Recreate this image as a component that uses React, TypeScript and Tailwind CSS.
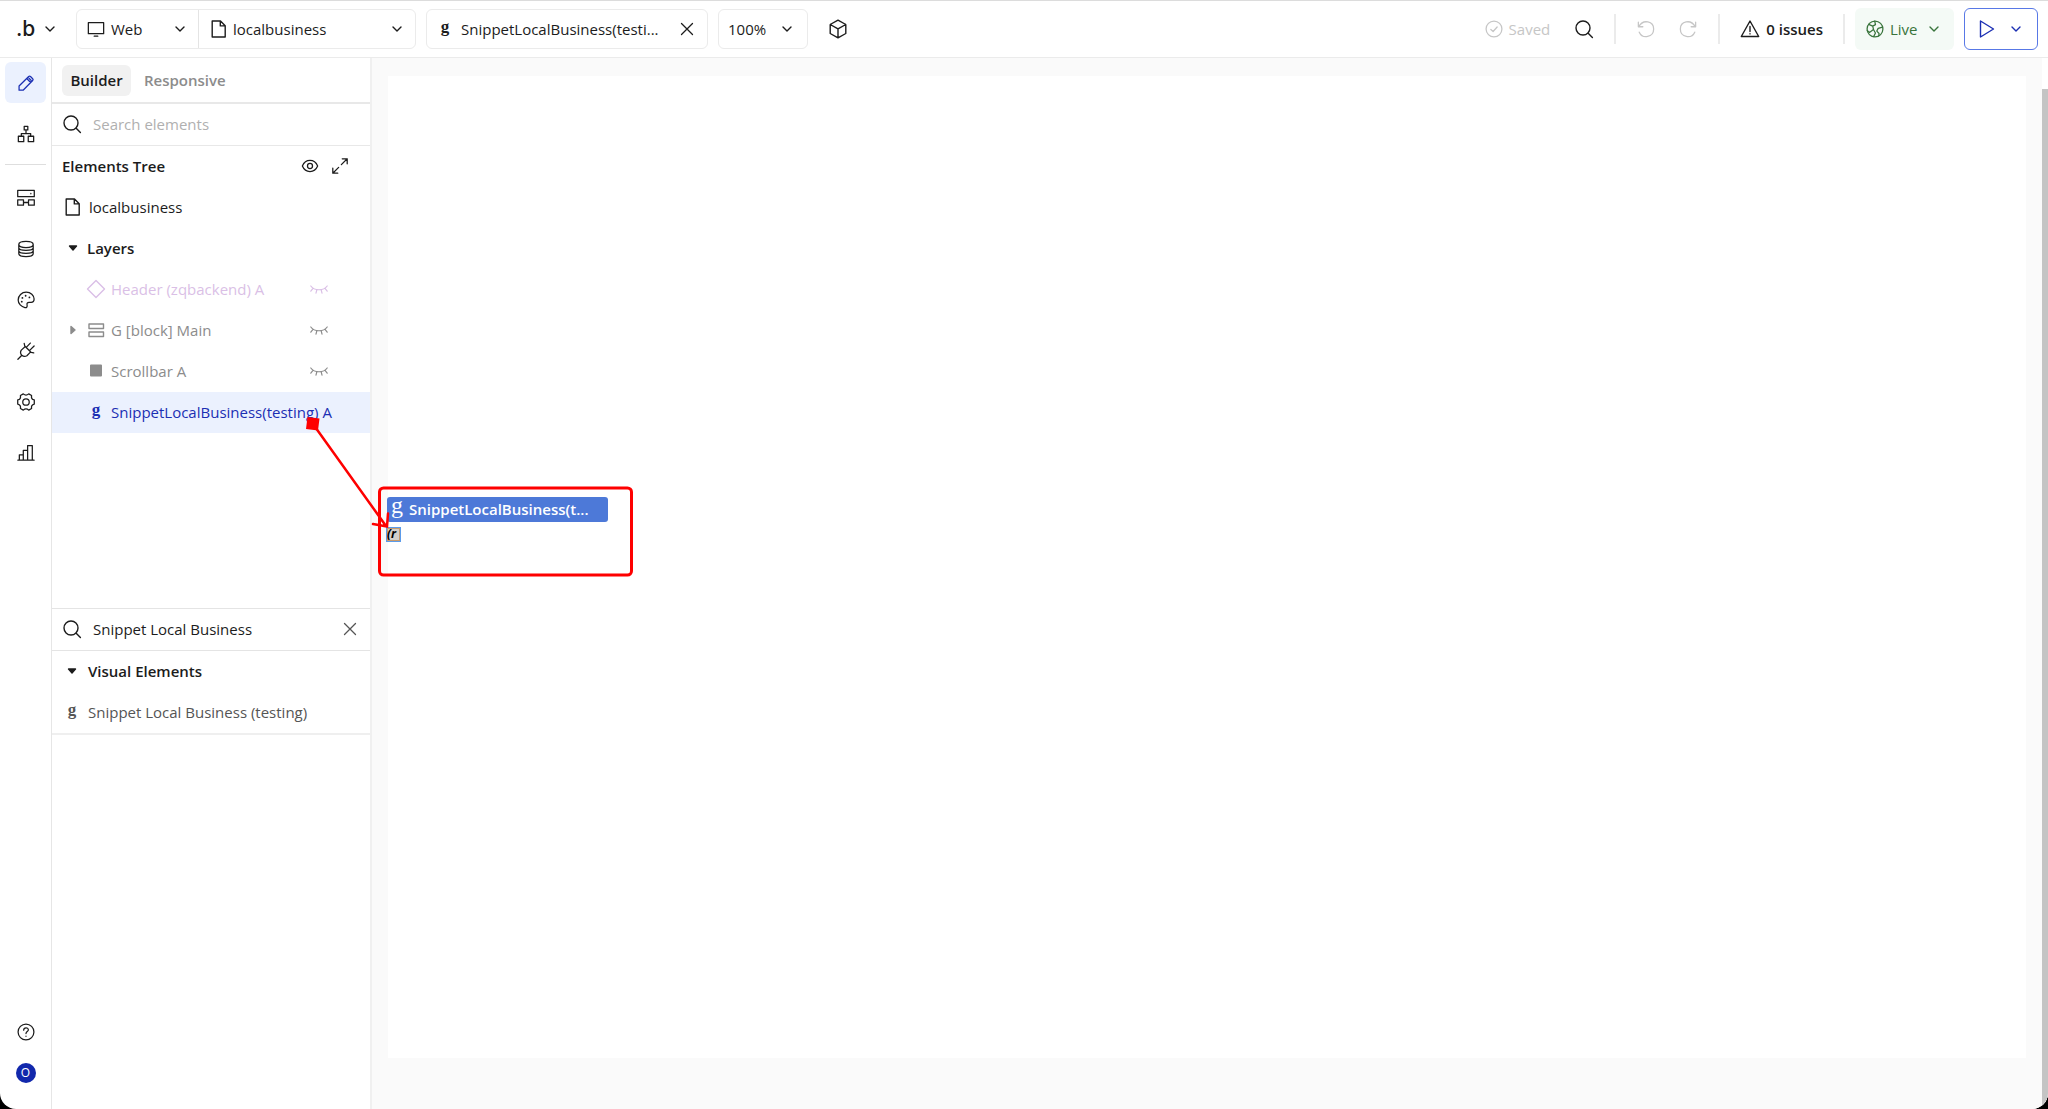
import { useState } from "react";
import type { ReactNode } from "react";

function Icon({
  children,
  size = 20,
  className = "",
}: {
  children: ReactNode;
  size?: number;
  className?: string;
}) {
  return (
    <svg
      className={`shrink-0 ${className}`}
      xmlns="http://www.w3.org/2000/svg"
      aria-hidden="true"
      width={size}
      height={size}
      viewBox="0 0 20 20"
      fill="none"
      stroke="currentColor"
      strokeWidth="1.4"
      strokeLinecap="round"
      strokeLinejoin="round"
    >
      {children}
    </svg>
  );
}

const Chevron = () => (
  <Icon className="-mx-1">
    <path d="M6 8l4 4L14 8" />
  </Icon>
);

const PageIcon = () => (
  <Icon>
    <path d="M3.2 2h8.300l4.700 4.700V18h-13zM11.300 2.200v4.700h4.700" />
  </Icon>
);

const SearchIcon = ({ size = 20 }: { size?: number }) => (
  <Icon size={size}>
    <circle cx="9" cy="9" r="7" />
    <path d="M14.2 14.2l4.2 4.2" />
  </Icon>
);

const CloseIcon = () => (
  <Icon>
    <path d="M4.500 4.500l11 11M15.500 4.500l-11 11" strokeWidth="1.300" />
  </Icon>
);

const ClosedEye = () => (
  <Icon>
    <path
      d="M1.800 7c3.600 5 12.800 5 16.400 0M4 9.400l-2.200 2.800M7.800 10.800L7 14.200M12.200 10.800l.8 3.400M16 9.400l2.200 2.800"
      strokeWidth="1.200"
    />
  </Icon>
);

const Triangle = () => (
  <Icon>
    <path d="M6.500 8h7l-3.500 4z" fill="currentColor" />
  </Icon>
);

const GLetter = () => (
  <span className="w-5 pb-1 text-center font-['Liberation_Serif',serif] text-[17px] leading-4 font-bold">
    g
  </span>
);

const tools = [
  {
    label: "Design",
    icon: (
      <path d="M2.3 18v-4.6L13 2.8q1-1 2 0l2.4 2.4q1 1 0 2L6.8 18zM10.8 5l4.400 4.400M13.3 4.700l2.300 2.300" />
    ),
  },
  {
    label: "Workflow",
    icon: (
      <path d="M8 1.5h4v4H8zM10 5.5v4M4.8 12.5v-3h10.4v3M1.5 12.5h6v6h-6zM12.5 12.5h6v6h-6z" />
    ),
  },
  {
    label: "Components",
    icon: (
      <path d="M.8 1.500h18.400v7H.8zM15.400 5v.3M.8 12h6.400v6H.8zM12.800 12h6.400v6h-6.400zM7.200 15h5.600" />
    ),
  },
  {
    label: "Data",
    icon: (
      <path d="M2 5c0-4.600 16-4.600 16 0s-16 4.600-16 0v10c0 4.600 16 4.600 16 0V5M2 8.600c0 3.800 16 3.800 16 0M2 12c0 3.800 16 3.800 16 0" />
    ),
  },
  {
    label: "Styles",
    icon: (
      <>
        <path d="M10.2 1.300c5 0 8.800 3.400 8.800 7.700 0 2.400-1 3.600-3.400 3.600h-2.200c-2 0-2.600 1.400-2.200 2.900.4 1.800-.4 3.400-2.400 2.900C4.800 17.600 1.300 14.200 1.300 10 1.300 5.100 5.300 1.300 10.200 1.300z" />
        <path d="M5.300 11.800v.1M6 7.600v.1M9.600 5.200v.1M13.800 7v.1" strokeWidth="2" />
      </>
    ),
  },
  {
    label: "Plugins",
    icon: (
      <path d="M1 19.200l4.400-4.400M8.600 4.400l7.200 7.200M9.200 5L4.800 9q-2 3 .6 5.800 2.600 2.200 5.600.4l4.200-4.200M10.800 5.400l4-4.200M14.400 9l4.600-4.600M15.800 11.600l2.800.6M8.600 4.400L8 1.600" />
    ),
  },
  {
    label: "Settings",
    icon: (
      <>
        <path d="M7 1q3 2.800 6 0l3.200 1.800q-.8 4 3 4.900v4.600q-3.800.9-3 4.900L13 19q-3-2.800-6 0l-3.200-1.800q.8-4-3-4.900V7.700q3.800-.9 3-4.900z" />
        <circle cx="10" cy="10" r="3.600" />
      </>
    ),
  },
  {
    label: "Logs",
    icon: <path d="M1 18h18M2.600 18v-6H7v6M7 12V7.200h4.800V18M11.800 7.200V1.800h5.200V18" />,
  },
];

const layers = [
  {
    name: "Header (zqbackend) A",
    color: "text-[#dabfe6]",
    icon: (
      <Icon>
        <path d="M10 1.500l8.500 8.500-8.500 8.500L1.500 10z" />
      </Icon>
    ),
  },
  {
    name: "G [block] Main",
    color: "text-[#8c8c8c]",
    expandable: true,
    icon: (
      <Icon>
        <path d="M3 4h14.500v4.500H3zM3 12h14.500v4.500H3z" />
      </Icon>
    ),
  },
  {
    name: "Scrollbar A",
    color: "text-[#8c8c8c]",
    icon: (
      <Icon>
        <path d="M5 4.500h10v10H5z" fill="currentColor" strokeWidth="2" />
      </Icon>
    ),
  },
  {
    name: "SnippetLocalBusiness(testing) A",
    color: "text-[#1b2fb3]",
    visible: true,
    icon: <GLetter />,
  },
];

function Header() {
  return (
    <header className="flex h-[58px] shrink-0 items-center justify-between border-t border-b border-t-[#dcdcdc] border-b-[#ebebeb] pr-[10px] pl-4">
      <div className="flex items-center">
        <button className="mr-5 flex items-center gap-3" aria-label="Menu">
          <span className="w-4 font-[Inter,sans-serif] text-[21px] leading-5 font-medium">.b</span>
          <Chevron />
        </button>
        <div className="flex h-10 rounded-md border border-[#ebebeb]">
          <button className="flex w-[122px] items-center border-r border-[#e4e4e4] pr-3 pl-[10px]">
            <Icon size={18}>
              <path d="M1.500 3h17v12.200h-17zM8 18h4" />
            </Icon>
            <span className="ml-[6px] flex-1 text-left">Web</span>
            <Chevron />
          </button>
          <button className="flex w-[216px] items-center pr-3 pl-[10px]">
            <PageIcon />
            <span className="ml-1 flex-1 text-left">localbusiness</span>
            <Chevron />
          </button>
        </div>
        <div className="ml-[10px] flex h-10 w-[282px] items-center rounded-md border border-[#ebebeb] pr-[10px] pl-2">
          <GLetter />
          <span className="ml-[6px] flex-1 whitespace-nowrap">SnippetLocalBusiness(testi...</span>
          <button aria-label="Close tab">
            <CloseIcon />
          </button>
        </div>
        <button className="ml-[10px] flex h-10 w-[90px] items-center justify-between rounded-md border border-[#ebebeb] pr-[14px] pl-[9px]">
          100%
          <Chevron />
        </button>
        <button className="ml-5" aria-label="3D view">
          <Icon>
            <path d="M10 1.200l7.800 4.300v9L10 18.800l-7.800-4.300v-9zM2.200 5.500L10 9.800l7.800-4.300M10 9.800v9" />
          </Icon>
        </button>
      </div>

      <div className="flex items-center">
        <span className="flex items-center gap-[6px] text-[#c6c6c6]">
          <Icon size={18}>
            <circle cx="10" cy="10" r="8.800" />
            <path d="M6.500 10.500l2.500 2.300 4.500-5" />
          </Icon>
          Saved
        </span>
        <button className="ml-6" aria-label="Search">
          <SearchIcon />
        </button>
        <span className="ml-5 h-[30px] w-[2px] bg-[#ebebeb]" />
        <button className="ml-[21px] text-[#c6c6c6]" aria-label="Undo" disabled>
          <Icon size={18}>
            <path d="M1.500 2.500v5h5M2 7.300C7 -1.500 18.500 1.500 18.500 10c0 9.500-12.500 11.500-16 3.500" />
          </Icon>
        </button>
        <button className="ml-6 text-[#c6c6c6]" aria-label="Redo" disabled>
          <Icon size={18}>
            <path d="M18.500 2.500v5h-5M18 7.300C13 -1.500 1.500 1.500 1.500 10c0 9.500 12.500 11.500 16 3.500" />
          </Icon>
        </button>
        <span className="ml-[21px] h-[30px] w-[2px] bg-[#ebebeb]" />
        <button className="ml-5 flex items-center gap-[6px] font-semibold">
          <Icon>
            <path d="M10 2L18.700 17.500H1.300zM10 7.500v5M10 14.700v.2" />
          </Icon>
          0 issues
        </button>
        <span className="ml-5 h-[30px] w-[2px] bg-[#ebebeb]" />
        <button className="ml-[10px] flex h-[42px] w-[99px] items-center rounded-md bg-[#f4faf6] pr-[14px] pl-[11px] text-[#39743c]">
          <Icon size={18}>
            <circle cx="10" cy="10" r="8.800" />
            <path d="M3 4.800l4.500 2 3-1.600-.8-4M7.500 6.800l.8 3.700-4.500 3.300-2.500-2.300M18.500 8l-5 1.300-1.500 3 2.500 2.700-.3 2.500M8.300 10.500l2.200 4-2 4" />
          </Icon>
          <span className="ml-[6px] flex-1 text-left">Live</span>
          <Chevron />
        </button>
        <button
          className="ml-[10px] flex h-[42px] w-[74px] items-center justify-between rounded-md border border-[#5878e6] pr-[15px] pl-3 text-[#1b2fb3]"
          aria-label="Preview"
        >
          <Icon>
            <path d="M3.500 2L16.500 10 3.500 18z" />
          </Icon>
          <Chevron />
        </button>
      </div>
    </header>
  );
}

function Rail() {
  const [current, setCurrent] = useState("Design");
  return (
    <nav className="flex w-[52px] shrink-0 flex-col items-center border-r border-[#e6e6e6] pt-1 pb-[26px]">
      {tools.map((t, idx) => (
        <div key={t.label} className="flex flex-col items-center">
          <button
            aria-label={t.label}
            onClick={() => setCurrent(t.label)}
            className={`mb-[10px] flex h-[41px] w-[41px] items-center justify-center rounded-md ${
              t.label === current ? "bg-[#ebf1fe] text-[#1b2fb3]" : ""
            }`}
          >
            <Icon size={18}>{t.icon}</Icon>
          </button>
          {idx === 1 && <span className="mb-3 h-px w-[41px] bg-[#dedede]" />}
        </div>
      ))}
      <button className="mt-auto mb-[22px]" aria-label="Help">
        <Icon size={18}>
          <circle cx="10" cy="10" r="8.800" />
          <path d="M7.400 8c0-3.600 5.400-3.400 5.200-.2-.2 1.800-2.600 1.800-2.600 4M10 14.600v.2" />
        </Icon>
      </button>
      <button className="h-5 w-5 rounded-full bg-[#1228ac] text-xs leading-5 text-white">O</button>
    </nav>
  );
}

function Panel() {
  const [search, setSearch] = useState("");
  const [palette, setPalette] = useState("Snippet Local Business");
  return (
    <aside className="flex w-[320px] shrink-0 flex-col border-r-2 border-[#f0f0f0]">
      <div className="flex h-[46px] items-center border-b-2 border-[#e8e8e8] px-[10px] font-semibold">
        <button className="h-[31px] w-[69px] rounded-md bg-[#f1f1f1]">Builder</button>
        <button className="ml-[13px] text-[#8c8c8c]">Responsive</button>
      </div>
      <label className="flex h-[42px] items-center gap-[11px] border-b border-[#e8e8e8] px-[10px] pb-[2px]">
        <SearchIcon />
        <input
          aria-label="Search elements"
          className="w-full outline-none placeholder:text-[#b0b0b0]"
          placeholder="Search elements"
          value={search}
          onChange={(e) => setSearch(e.target.value)}
        />
      </label>

      <div className="flex h-[41px] items-center pr-[21px] pb-[2px] pl-[10px] font-semibold">
        <h2 className="flex-1">Elements Tree</h2>
        <button aria-label="Show all">
          <Icon size={18}>
            <path d="M1.500 10C5 1.800 15 1.800 18.500 10 15 18.200 5 18.200 1.500 10z" />
            <circle cx="10" cy="10" r="2.800" />
          </Icon>
        </button>
        <button className="ml-3" aria-label="Expand">
          <Icon size={18}>
            <path d="M12.500 2H18v5.500M18 2l-6.500 6.500M7.500 18H2v-5.500M2 18l6.500-6.500" />
          </Icon>
        </button>
      </div>
      <div className="flex h-[41px] items-center gap-[6px] px-[11px] pb-[2px]">
        <PageIcon />
        localbusiness
      </div>
      <button className="flex h-[41px] items-center gap-1 px-[11px] pb-[2px] text-left font-semibold">
        <Triangle />
        Layers
      </button>
      <ul>
        {layers.map((l) => (
          <li
            key={l.name}
            className={`flex h-[41px] items-center pr-[41px] pb-[2px] pl-[10px] whitespace-nowrap ${l.color} ${
              l.visible ? "bg-[#ebf1fe]" : ""
            }`}
          >
            <Icon className={l.expandable ? "" : "invisible"}>
              <path d="M9 6.500v7l4-3.500z" fill="currentColor" />
            </Icon>
            <span className="mr-[5px] ml-1 flex">{l.icon}</span>
            <span className="w-0 flex-1">{l.name}</span>
            {!l.visible && (
              <button aria-label="Toggle visibility">
                <ClosedEye />
              </button>
            )}
          </li>
        ))}
      </ul>

      <div className="mt-[175px] flex h-[43px] items-center gap-[11px] border-t border-b border-[#e4e4e4] px-[10px] pb-[2px]">
        <SearchIcon />
        <input
          aria-label="Search palette"
          className="w-0 flex-1 outline-none"
          value={palette}
          onChange={(e) => setPalette(e.target.value)}
        />
        <button className="text-[#555]" aria-label="Clear search" onClick={() => setPalette("")}>
          <CloseIcon />
        </button>
      </div>
      <button className="flex h-[41px] items-center gap-[6px] px-[10px] pb-[2px] text-left font-semibold">
        <Triangle />
        Visual Elements
      </button>
      <div className="flex h-[43px] items-center gap-[6px] border-b-2 border-[#efefef] px-[10px] pb-[2px] text-[#555]">
        <GLetter />
        Snippet Local Business (testing)
      </div>
    </aside>
  );
}

function Canvas() {
  return (
    <main className="relative flex flex-1 bg-[#fafafa]">
      <div className="flex flex-1 pt-[18px] pr-4 pb-[51px] pl-4">
        <div className="relative flex-1 bg-white">
          <div className="absolute top-[421px] -left-px flex h-[25px] w-[221px] items-center rounded-[3px] bg-[#4d79d8] pb-px pl-1 font-semibold whitespace-nowrap text-white">
            <span className="mr-[6px] pb-2 font-['Liberation_Serif',serif] text-2xl leading-4 font-normal">
              g
            </span>
            SnippetLocalBusiness(t...
          </div>
          <div className="absolute top-[451px] -left-[2px] h-[15px] w-[15px] overflow-hidden border border-[#5b9bea] bg-[#d3d0cb] text-xs leading-3 font-bold text-black italic inset-ring inset-ring-[#c79a6b]">
            (r
          </div>
        </div>
      </div>
      <div className="flex w-[6px] flex-col bg-white pt-[31px]">
        <div className="flex-1 bg-[#c4c4c4]" />
      </div>

      {/* arrow and frame */}
      <svg
        className="pointer-events-none absolute top-[353px] -left-[73px]"
        width="340"
        height="170"
        viewBox="0 0 340 170"
        fill="none"
        stroke="#fe0000"
        strokeWidth="3"
        strokeLinecap="round"
        aria-hidden="true"
      >
        <path d="M8.500 6l12 1.500-1.500 12-12-1.500z" fill="#fe0000" stroke="none" />
        <path d="M14 13L87 115M74 113l14 2.500 1-13" strokeWidth="2.500" />
        <rect x="80.500" y="77" width="252" height="87" rx="4" />
      </svg>
    </main>
  );
}

export default function App() {
  return (
    <div className="h-screen bg-black">
      <div className="flex h-full flex-col overflow-hidden rounded-b-2xl bg-white font-['Open_Sans',sans-serif] text-[15px] leading-5 text-[#1c1c1c]">
        <Header />
        <div className="flex min-h-0 flex-1">
          <Rail />
          <Panel />
          <Canvas />
        </div>
      </div>
    </div>
  );
}
